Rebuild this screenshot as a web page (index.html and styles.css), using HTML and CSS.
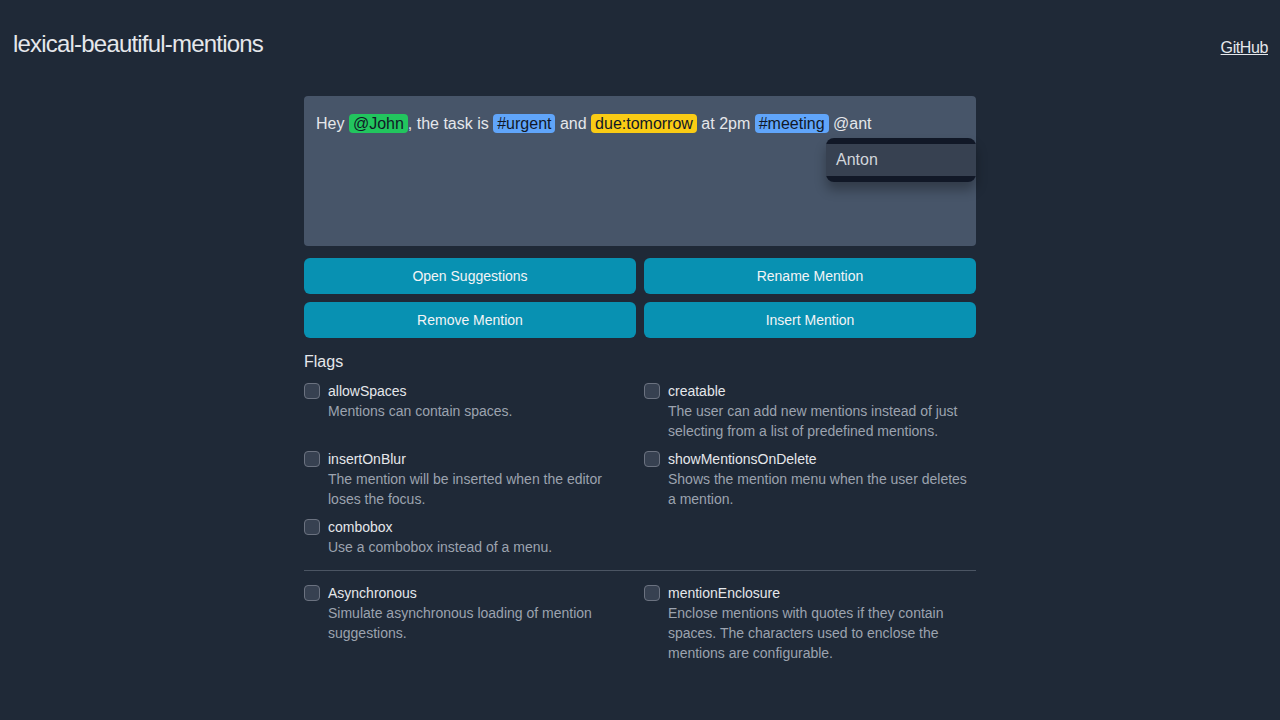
FILE: index.html
```html
<!DOCTYPE html>
<html lang="en">
<head>
<meta charset="utf-8">
<title>lexical-beautiful-mentions</title>
<link rel="stylesheet" href="styles.css">
</head>
<body>
<header class="header">
  <h1 class="title">lexical-beautiful-mentions</h1>
  <a class="gh" href="#">GitHub</a>
</header>
<main class="main">
  <div class="editor">
    <p class="line">Hey <span class="chip chip-green">@John</span>, the task is <span class="chip chip-blue">#urgent</span> and <span class="chip chip-yellow">due:tomorrow</span> at 2pm <span class="chip chip-blue">#meeting</span> @ant</p>
    <div class="menu">
      <div class="menu-item">Anton</div>
    </div>
  </div>
  <div class="buttons">
    <button class="btn">Open Suggestions</button>
    <button class="btn">Rename Mention</button>
    <button class="btn">Remove Mention</button>
    <button class="btn">Insert Mention</button>
  </div>
  <h2 class="flags-title">Flags</h2>
  <div class="flags">
    <label class="flag"><span class="box"></span><span class="flag-text"><span class="flag-name">allowSpaces</span><span class="flag-desc">Mentions can contain spaces.</span></span></label>
    <label class="flag"><span class="box"></span><span class="flag-text"><span class="flag-name">creatable</span><span class="flag-desc">The user can add new mentions instead of just selecting from a list of predefined mentions.</span></span></label>
    <label class="flag"><span class="box"></span><span class="flag-text"><span class="flag-name">insertOnBlur</span><span class="flag-desc">The mention will be inserted when the editor loses the focus.</span></span></label>
    <label class="flag"><span class="box"></span><span class="flag-text"><span class="flag-name">showMentionsOnDelete</span><span class="flag-desc">Shows the mention menu when the user deletes a mention.</span></span></label>
    <label class="flag"><span class="box"></span><span class="flag-text"><span class="flag-name">combobox</span><span class="flag-desc">Use a combobox instead of a menu.</span></span></label>
  </div>
  <hr class="divider">
  <div class="flags">
    <label class="flag"><span class="box"></span><span class="flag-text"><span class="flag-name">Asynchronous</span><span class="flag-desc">Simulate asynchronous loading of mention suggestions.</span></span></label>
    <label class="flag"><span class="box"></span><span class="flag-text"><span class="flag-name">mentionEnclosure</span><span class="flag-desc">Enclose mentions with quotes if they contain spaces. The characters used to enclose the mentions are configurable.</span></span></label>
  </div>
</main>
</body>
</html>
```
FILE: styles.css
```css
* { box-sizing: border-box; }
html, body {
  margin: 0;
  padding: 0;
  background: #1f2937;
  color: #e5e7eb;
  font-family: "Liberation Sans", Arial, sans-serif;
}
.header {
  display: flex;
  justify-content: space-between;
  align-items: flex-start;
  padding: 28px 12px 0 13px;
  height: 96px;
}
.title {
  margin: 0;
  font-size: 24px;
  font-weight: 400;
  line-height: 32px;
  letter-spacing: -0.8px;
  color: #e5e7eb;
}
.gh {
  margin-top: 8px;
  font-size: 16px;
  line-height: 24px;
  letter-spacing: -0.4px;
  color: #e5e7eb;
  text-decoration: underline;
}
.main {
  width: 672px;
  margin: 0 auto;
}
.editor {
  position: relative;
  height: 150px;
  background: #475569;
  border-radius: 4px;
  padding: 16px 12px;
}
.line {
  margin: 0;
  font-size: 16px;
  line-height: 24px;
  color: #e5e7eb;
}
.chip {
  padding: 1px 4px;
  border-radius: 4px;
  color: #111827;
}
.chip-green { background: #22c55e; }
.chip-blue { background: #60a5fa; }
.chip-yellow { background: #facc15; }
.menu {
  position: absolute;
  top: 42px;
  left: 522px;
  width: 150px;
  padding: 6px 0;
  background: #111827;
  border-radius: 8px;
  box-shadow: 0 8px 12px rgba(0, 0, 0, 0.3);
}
.menu-item {
  background: #374151;
  color: #d1d5db;
  font-size: 16px;
  line-height: 32px;
  padding: 0 10px;
}
.buttons {
  display: grid;
  grid-template-columns: 1fr 1fr;
  gap: 8px;
  margin-top: 12px;
}
.btn {
  height: 36px;
  border: none;
  border-radius: 6px;
  background: #0891b2;
  color: #f3f4f6;
  font-family: inherit;
  font-size: 14px;
}
.flags-title {
  margin: 12px 0 7px 0;
  font-size: 16px;
  font-weight: 400;
  line-height: 24px;
  color: #e5e7eb;
}
.flags {
  display: grid;
  grid-template-columns: 1fr 1fr;
  column-gap: 8px;
  row-gap: 8px;
}
.flag {
  display: flex;
  gap: 8px;
  align-items: flex-start;
}
.box {
  flex: none;
  width: 16px;
  height: 16px;
  margin-top: 2px;
  border: 1px solid #6b7280;
  border-radius: 4px;
  background: #374151;
}
.flag-text {
  display: flex;
  flex-direction: column;
  font-size: 14px;
  line-height: 20px;
}
.flag-name { color: #e5e7eb; }
.flag-desc { color: #9ca3af; }
.divider {
  margin: 13px 0 12px 0;
  border: none;
  border-top: 1px solid #4b5563;
}
```
